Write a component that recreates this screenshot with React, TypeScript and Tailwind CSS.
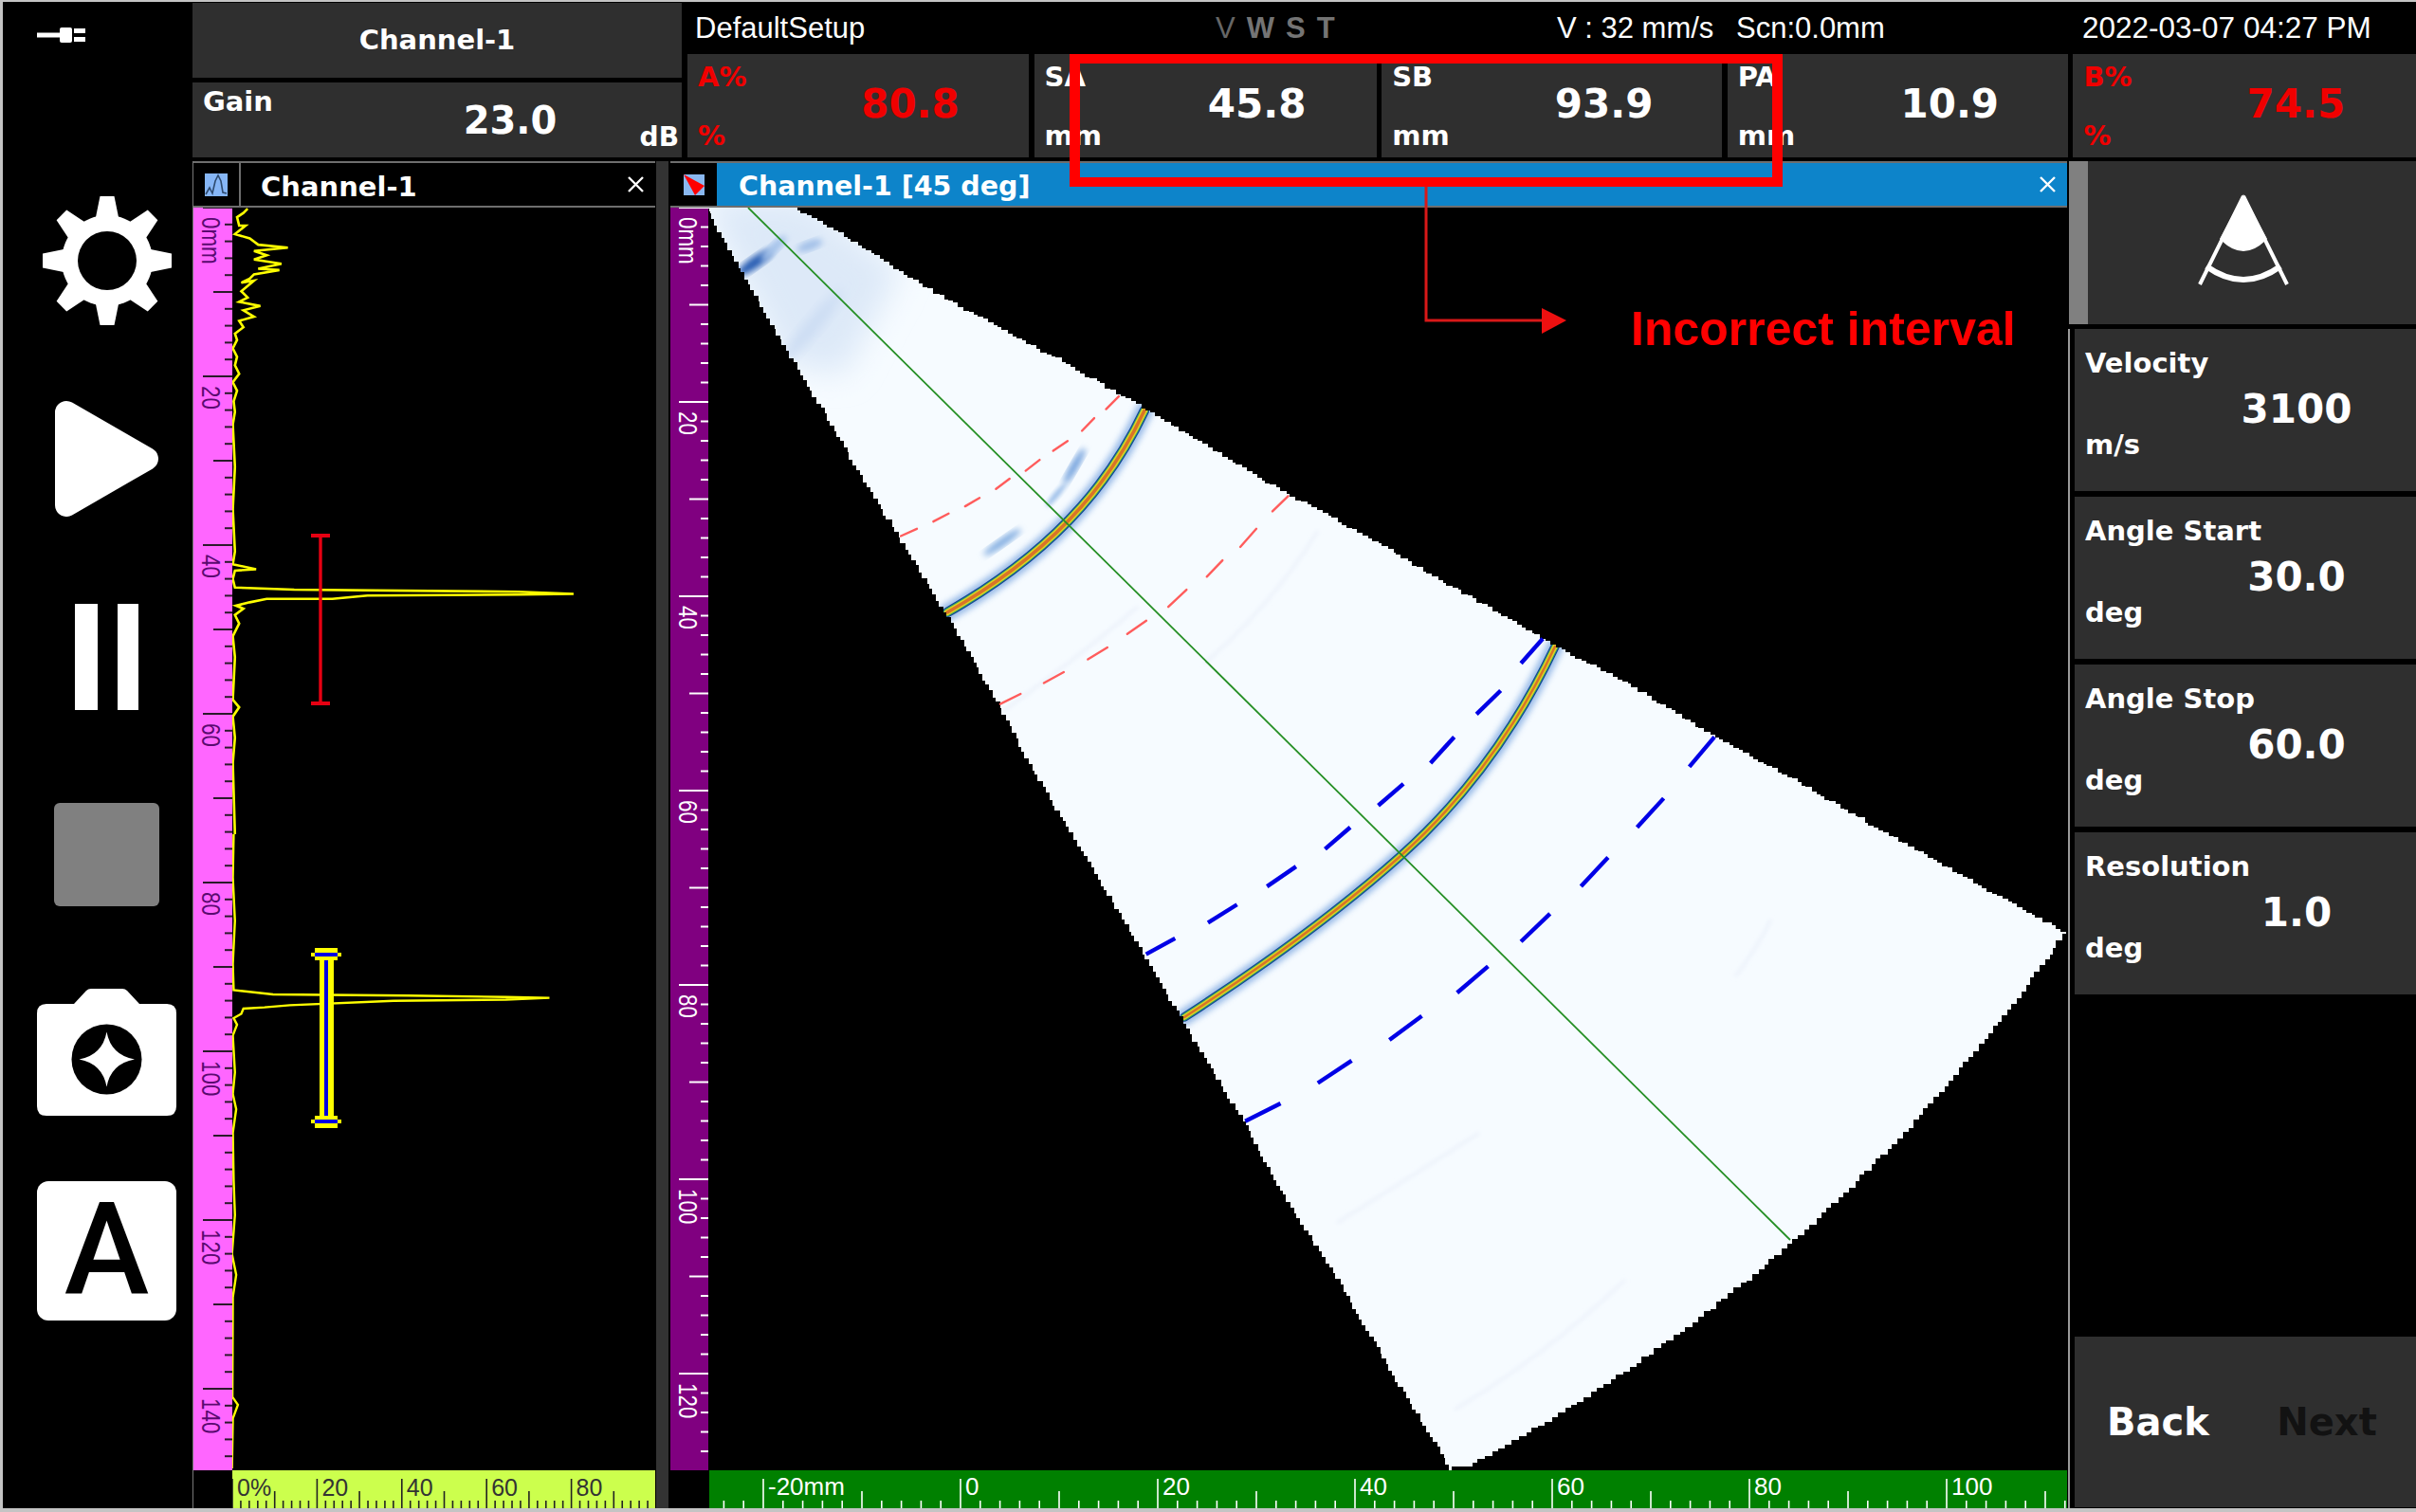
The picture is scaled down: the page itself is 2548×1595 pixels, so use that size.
import React from "react";

const TAHOMA = "font-['DejaVu_Sans',sans-serif] font-bold";
const ARIAL = "font-['Liberation_Sans',Arial,sans-serif]";

type P = [number, number];
const z3 = (p: P): string => `${p[0] / 2.24},${p[1] / 2.24 + 180}`;
const z4 = (p: P): string => `${p[0] / 2.24},${p[1] / 2.19 + 880}`;
const z5 = (p: P): P => [p[0] / 2.24 + 700, p[1] / 2.613 + 200];
const z6 = (p: P): P => [p[0] / 1.96 + 1150, p[1] / 2.613 + 650];

const traceA: P[] = [[585,90],[575,100],[560,110],[565,130],[580,130],[555,150],[590,160],[610,175],[680,182],[600,190],[630,200],[600,210],[665,220],[610,232],[660,235],[600,245],[590,255],[570,265],[600,260],[570,285],[585,300],[565,310],[615,320],[575,330],[600,345],[565,355],[575,370],[555,385],[560,400],[550,420],[560,440],[555,460],[565,480],[550,500],[560,520],[552,545],[555,570],[550,600],[555,700],[550,800],[555,900],[550,930],[605,942],[555,945],[550,965],[555,985],[695,990],[1225,995],[1355,1000],[1225,1002],[868,1004],[785,1012],[630,1012],[590,1020],[558,1028],[575,1035],[555,1050],[565,1070],[550,1100],[555,1150],[550,1250],[565,1268],[550,1290],[555,1340],[550,1400],[555,1568]];
const traceB: P[] = [[552,0],[550,100],[555,200],[550,300],[552,360],[645,370],[965,373],[1195,376],[1298,378],[1195,382],[930,385],[685,395],[625,400],[575,403],[570,415],[552,425],[560,440],[550,465],[555,550],[550,600],[558,635],[550,690],[552,800],[555,880],[548,970],[558,1018],[550,1070],[549,1300],[562,1318],[550,1350],[548,1465]];

const redDashes: [P, P][] = [
  [[560,955],[598,935]],[[637,915],[673,893]],[[712,873],[746,850]],[[785,825],[817,797]],[[855,775],[888,745]],[[920,720],[954,693]],[[988,665],[1017,630]],[[1045,605],[1075,570]],
  [[795,1418],[843,1390]],[[898,1360],[945,1330]],[[1002,1295],[1048,1262]],[[1095,1225],[1140,1188]],[[1192,1150],[1235,1103]],[[1283,1067],[1320,1022]],[[1362,985],[1400,935]],[[1438,887],[1475,845]],
];
const blueDashes: [P, P][] = [
  [[115,932],[175,888]],[[243,845],[303,795]],[[365,745],[425,690]],[[485,642],[537,582]],[[595,522],[647,462]],[[703,405],[752,333]],[[798,270],[848,205]],[[890,130],[935,62]],
  [[320,1392],[393,1343]],[[470,1287],[540,1225]],[[618,1168],[685,1102]],[[758,1038],[822,965]],[[890,897],[950,820]],[[1014,745],[1070,665]],[[1130,582],[1185,502]],[[1238,415],[1290,333]],
];

const topEdge: P[] = [[834,219],[879,242],[937,280],[995,315],[1057,349],[1124,384],[1209,433],[1289,481],[1356,521],[1400,544],[1584,650],[1640,682],[1711,719],[1808,778],[1890,822],[1950,858],[2179,986]];
const leftEdge: P[] = [[1532,1551],[1465,1440],[1413,1350],[1349,1250],[1313,1182],[1247,1073],[1201,994],[1150,910],[1084,800],[1057,747],[995,640],[932,537],[879,449],[829,365],[785,288],[747,219]];

function noise(i: number): number {
  const v = Math.sin(i * 12.9898) * 43758.5453;
  return (v - Math.floor(v)) * 2 - 1;
}

function subdivide(pts: P[], step: number): P[] {
  const out: P[] = [];
  for (let i = 0; i < pts.length - 1; i++) {
    const [a, b] = [pts[i], pts[i + 1]];
    const n = Math.max(1, Math.round(Math.hypot(b[0] - a[0], b[1] - a[1]) / step));
    for (let k = 0; k < n; k++) out.push([a[0] + ((b[0] - a[0]) * k) / n, a[1] + ((b[1] - a[1]) * k) / n]);
  }
  return out;
}

function arcPoints(step: number): P[] {
  const p1: P = [2179, 986];
  const p2: P = [1552, 1547];
  const R = 1766;
  const mx = (p1[0] + p2[0]) / 2;
  const my = (p1[1] + p2[1]) / 2;
  const c = Math.hypot(p2[0] - p1[0], p2[1] - p1[1]);
  const nx = (p1[1] - p2[1]) / c;
  const ny = (p2[0] - p1[0]) / c;
  const sign = nx > 0 ? -1 : 1;
  const d = Math.sqrt(R * R - (c * c) / 4);
  const cx = mx + sign * nx * d;
  const cy = my + sign * ny * d;
  const a1 = Math.atan2(p1[1] - cy, p1[0] - cx);
  const a2 = Math.atan2(p2[1] - cy, p2[0] - cx);
  const n = Math.round(c / step);
  const out: P[] = [];
  for (let k = 0; k < n; k++) {
    const a = a1 + ((a2 - a1) * k) / n;
    out.push([cx + R * Math.cos(a), cy + R * Math.sin(a)]);
  }
  out.push(p2);
  return out;
}

function buildSector(): string {
  const rough: P[] = [
    ...subdivide(topEdge, 6),
    ...arcPoints(8),
    ...subdivide(leftEdge, 7),
  ];
  let d = "M747 219 L834 219";
  rough.forEach((p, i) => {
    const x = Math.round(p[0] + noise(i) * 1.4);
    const y = Math.round(p[1] + noise(i + 500) * 1.4);
    d += ` H${x} V${y}`;
  });
  return d + " Z";
}
const SECTOR = buildSector();

function VRuler({ x, w, step, labels, bg, tick, text }: { x: number; w: number; step: number; labels: string[]; bg: string; tick: string; text: string }) {
  const rows = [];
  for (let i = 0; 219 + i * step < 1551; i++) {
    const y = 219 + i * step;
    const len = i % 10 === 0 ? 31 : i % 5 === 0 ? 20 : 8;
    rows.push(<line key={i} x1={x + w - len} x2={x + w} y1={y} y2={y} stroke={tick} strokeWidth={2} />);
  }
  return (
    <svg width={w} height={1332} viewBox={`${x} 219 ${w} 1332`} className="block shrink-0" style={{ background: bg }}>
      {rows}
      {labels.map((l, k) => (
        <text
          key={l}
          transform={`translate(${x + 9},${219 + k * 10 * step + 10}) rotate(90) scale(0.8,1)`}
          fontSize={28}
          fill={text}
          className={ARIAL}
        >
          {l}
        </text>
      ))}
    </svg>
  );
}

function HRuler({ x0, w, zero, unit, start, end, bg, tick, text, labels, baseline, size }: { x0: number; w: number; zero: number; unit: number; start: number; end: number; bg: string; tick: string; text: string; labels: [number, string][]; baseline: number; size: number }) {
  const ticks = [];
  for (let v = start; v <= end; v += 2) {
    const px = zero + v * unit;
    const len = v % 20 === 0 ? 31 : v % 10 === 0 ? 18 : 8;
    ticks.push(<line key={v} x1={px} x2={px} y1={1591} y2={1591 - len} stroke={tick} strokeWidth={1.6} />);
  }
  return (
    <svg width={w} height={40} viewBox={`${x0} 1551 ${w} 40`} className="block shrink-0" style={{ background: bg }}>
      {ticks}
      {labels.map(([v, l]) => (
        <text key={l} x={zero + v * unit + 5} y={baseline} fontSize={size} fill={text} className={ARIAL}>
          {l}
        </text>
      ))}
    </svg>
  );
}

function Gate({ x, top, bottom }: { x: number; top: number; bottom: number }) {
  return (
    <g>
      <rect x={x - 7} y={top + 3} width={15} height={bottom - top - 6} fill="#ffff00" />
      <rect x={x - 2} y={top + 6} width={4} height={bottom - top - 12} fill="#0000e0" />
      <rect x={x - 12} y={top} width={24} height={13} fill="#ffff00" />
      <rect x={x - 16} y={top + 5} width={32} height={4} fill="#ffff00" />
      <rect x={x - 12} y={top + 5} width={24} height={4} fill="#0000e0" />
      <rect x={x - 12} y={bottom - 13} width={24} height={13} fill="#ffff00" />
      <rect x={x - 16} y={bottom - 9} width={32} height={4} fill="#ffff00" />
      <rect x={x - 12} y={bottom - 9} width={24} height={4} fill="#0000e0" />
    </g>
  );
}

function AScan() {
  return (
    <svg width={446} height={1332} viewBox="245 219 446 1332" className="block shrink-0 bg-black">
      <polyline points={traceA.map(z3).join(" ")} fill="none" stroke="#ffff00" strokeWidth={2.6} />
      <polyline points={traceB.map(z4).join(" ")} fill="none" stroke="#ffff00" strokeWidth={2.4} />
      <line x1={338} x2={338} y1={565} y2={742} stroke="#e60012" strokeWidth={3.4} />
      <line x1={328} x2={348} y1={565} y2={565} stroke="#e60012" strokeWidth={4} />
      <line x1={328} x2={348} y1={742} y2={742} stroke="#e60012" strokeWidth={4} />
      <Gate x={344} top={1000} bottom={1190} />
    </svg>
  );
}

function Arc({ d, w }: { d: string; w: number }) {
  return (
    <g fill="none" strokeLinecap="round">
      <path d={d} stroke="#7aa6e0" strokeWidth={w + 8} filter="url(#blur3)" opacity={0.75} />
      <path d={d} stroke="#123f96" strokeWidth={w} />
      <path d={d} stroke="#2f9a6a" strokeWidth={w - 2} />
      <path d={d} stroke="#dcd420" strokeWidth={w - 4} />
      <path d={d} stroke="#d8622a" strokeWidth={w - 7} opacity={0.85} />
    </g>
  );
}

function Sector() {
  return (
    <svg width={1433} height={1332} viewBox="747 219 1433 1332" className="block shrink-0 bg-black">
      <defs>
        <clipPath id="sectorClip">
          <path d={SECTOR} />
        </clipPath>
        <filter id="blur2" x="-50%" y="-50%" width="200%" height="200%"><feGaussianBlur stdDeviation="2" /></filter>
        <filter id="blur3" x="-20%" y="-20%" width="140%" height="140%"><feGaussianBlur stdDeviation="3" /></filter>
        <filter id="blur5" x="-50%" y="-50%" width="200%" height="200%"><feGaussianBlur stdDeviation="6" /></filter>
        <filter id="blur14" x="-50%" y="-50%" width="200%" height="200%"><feGaussianBlur stdDeviation="16" /></filter>
      </defs>
      <path d={SECTOR} fill="#f6fbff" shapeRendering="crispEdges" />
      <g clipPath="url(#sectorClip)">
        <polygon points="740,210 850,210 950,285 890,395 830,385" fill="#dde9f8" filter="url(#blur14)" />
        <ellipse cx={856} cy={345} rx={50} ry={7} transform="rotate(-50 856 345)" fill="#cbdcf3" filter="url(#blur5)" />
        <ellipse cx={796} cy={277} rx={22} ry={6} transform="rotate(-35 796 277)" fill="#2a5fb4" filter="url(#blur3)" />
        <ellipse cx={816} cy={262} rx={18} ry={5} transform="rotate(-45 816 262)" fill="#a4c2ea" filter="url(#blur3)" />
        <ellipse cx={854} cy={259} rx={14} ry={5} transform="rotate(-20 854 259)" fill="#a2c0e8" filter="url(#blur3)" />
        <ellipse cx={1133} cy={492} rx={22} ry={4} transform="rotate(-60 1133 492)" fill="#6f9fdc" filter="url(#blur3)" />
        <ellipse cx={1114} cy={522} rx={16} ry={3} transform="rotate(-50 1114 522)" fill="#9dbfe9" filter="url(#blur2)" />
        <ellipse cx={1057} cy={572} rx={24} ry={4} transform="rotate(-35 1057 572)" fill="#7fabe0" filter="url(#blur3)" />
        <g fill="none" stroke="#ebf1fa" strokeWidth={3} filter="url(#blur2)">
          <path d="M1830 1030 Q1850 1005 1868 970" />
          <path d="M1410 1290 Q1490 1240 1560 1195" />
          <path d="M1534 1487 Q1630 1430 1714 1350" />
          <path d="M1030 770 Q1130 700 1200 640" />
          <path d="M1270 700 Q1340 640 1390 560" />
        </g>
        <Arc d="M999 646 Q1085 597 1140 535 Q1180 490 1207 433" w={10.5} />
        <Arc d="M1249 1073 Q1385 985 1477 903 Q1578 813 1640 682" w={9.5} />
      </g>
      <line x1={789} y1={219} x2={1888} y2={1308} stroke="#258f25" strokeWidth={1.8} />
      {redDashes.map(([a, b], i) => {
        const p = z5(a);
        const q = z5(b);
        return <line key={i} x1={p[0]} y1={p[1]} x2={q[0]} y2={q[1]} stroke="#ff5c5c" strokeWidth={2.4} strokeLinecap="round" />;
      })}
      {blueDashes.map(([a, b], i) => {
        const p = z6(a);
        const q = z6(b);
        return <line key={i} x1={p[0]} y1={p[1]} x2={q[0]} y2={q[1]} stroke="#0000e6" strokeWidth={4.4} />;
      })}
    </svg>
  );
}

function Gear() {
  const angles = [0, 45, 90, 135, 180, 225, 270, 315];
  return (
    <svg width={136} height={136} viewBox="0 0 136 136">
      <circle cx={68} cy={68} r={48} fill="#fff" />
      {angles.map((a) => (
        <polygon key={a} points="60.5,0 75.5,0 81,27 55,27" fill="#fff" transform={`rotate(${a} 68 68)`} />
      ))}
      <circle cx={68} cy={68} r={31} fill="#000" />
    </svg>
  );
}

function Plug() {
  return (
    <svg width={51} height={16} viewBox="0 0 51 16" className="ml-[17px] self-start">
      <rect x={0} y={5.5} width={26} height={5} fill="#fff" />
      <rect x={24} y={0} width={13} height={16} rx={2} fill="#fff" />
      <rect x={39} y={1} width={12} height={5} fill="#fff" />
      <rect x={39} y={10} width={12} height={5} fill="#fff" />
    </svg>
  );
}

function Sidebar() {
  return (
    <div className="flex w-[200px] shrink-0 flex-col items-center pl-[19px]">
      <div className="mt-[27px] flex self-stretch">
        <Plug />
      </div>
      <div className="mt-[162px]">
        <Gear />
      </div>
      <svg width={110} height={122} viewBox="0 0 110 122" className="mt-[80px]">
        <polygon points="12,12 97,61 12,110" fill="#fff" stroke="#fff" strokeWidth={24} strokeLinejoin="round" />
      </svg>
      <div className="mt-[92px] flex gap-[21px]">
        <div className="h-[112px] w-[24px] bg-white" />
        <div className="h-[112px] w-[22px] bg-white" />
      </div>
      <div className="mt-[98px] h-[109px] w-[111px] rounded-[6px] bg-[#808080]" />
      <svg width={147} height={134} viewBox="0 0 147 134" className="mt-[87px]">
        <path d="M39 16 L52 2 Q54 0 57 0 L90 0 Q93 0 95 2 L108 16 L137 16 Q147 16 147 26 L147 124 Q147 134 137 134 L10 134 Q0 134 0 124 L0 26 Q0 16 10 16 Z" fill="#fff" />
        <circle cx={73.5} cy={74.5} r={37} fill="#000" />
        <path d="M73.5 45.5 Q78 70 103 74.5 Q78 79 73.5 103.5 Q69 79 44.5 74.5 Q69 70 73.5 45.5 Z" fill="#fff" />
      </svg>
      <div className="mt-[69px] flex h-[147px] w-[147px] items-center justify-center rounded-[12px] bg-white font-['Roboto',sans-serif] text-[135px] leading-none font-medium text-black">
        A
      </div>
    </div>
  );
}

function TopMeasure({ label, value, unit, red, w }: { label: string; value: string; unit: string; red?: boolean; w: string }) {
  const color = red ? "text-[#f00000]" : "text-white";
  return (
    <div className={`flex h-full shrink-0 bg-[#2f2f2f] ${w} ${TAHOMA} ${color}`}>
      <div className="flex w-[110px] shrink-0 flex-col pt-[6px] pl-[11px] text-[29px] leading-[36px] whitespace-nowrap">
        <div>{label}</div>
        <div className="mt-[26px]">{unit}</div>
      </div>
      <div className="flex w-[250px] items-center justify-center pb-[3px] text-[42px] leading-[48px]">{value}</div>
    </div>
  );
}

function SideParam({ label, value, unit }: { label: string; value: string; unit: string }) {
  return (
    <div className={`flex h-[171px] shrink-0 bg-[#2f2f2f] text-white ${TAHOMA}`}>
      <div className="flex w-[109px] shrink-0 flex-col pt-[18px] pl-[11px] text-[29px] leading-[36px] whitespace-nowrap">
        <div>{label}</div>
        <div className="mt-[50px]">{unit}</div>
      </div>
      <div className="flex w-[250px] items-center justify-center pb-[2px] text-[42px] leading-[48px]">{value}</div>
    </div>
  );
}

function CloseX() {
  return (
    <svg width={17} height={17} viewBox="0 0 17 17" className="shrink-0">
      <path d="M1 1 L16 16 M16 1 L1 16" stroke="#fff" strokeWidth={2.4} />
    </svg>
  );
}

function Header() {
  return (
    <div className="mt-[1px] flex h-[163px] shrink-0">
      <div className={`flex w-[516px] shrink-0 flex-col gap-[5px] text-white ${TAHOMA}`}>
        <div className="flex h-[79px] items-center justify-center bg-[#2f2f2f] pt-[1px] text-[29px]">Channel-1</div>
        <div className="flex h-[79px] bg-[#2f2f2f]">
          <div className="w-[200px] shrink-0 pt-[2px] pl-[11px] text-[29px] leading-[36px]">Gain</div>
          <div className="flex w-[270px] shrink-0 items-center justify-center text-[40px] leading-[48px]">23.0</div>
          <div className="flex flex-1 items-end justify-end pr-[3px] pb-[3px] text-[28px] leading-[36px]">dB</div>
        </div>
      </div>
      <div className="ml-[6px] flex flex-1 flex-col">
        <div className={`flex h-[54px] shrink-0 items-center text-[31px] text-white ${ARIAL} whitespace-nowrap`}>
          <div className="w-[557px] shrink-0 pl-[8px]">DefaultSetup</div>
          <div className="flex w-[360px] shrink-0 items-center gap-[12px] font-bold text-[#747474]">
            <span className="font-normal text-[#666]">V</span>
            <span>W</span>
            <span>S</span>
            <span>T</span>
          </div>
          <div className="w-[189px] shrink-0">V : 32 mm/s</div>
          <div className="w-[365px] shrink-0">Scn:0.0mm</div>
          <div className="text-[31.5px]">2022-03-07 04:27 PM</div>
        </div>
        <div className="flex h-[109px] gap-[5.6px]">
          <TopMeasure w="w-[360px]" label="A%" value="80.8" unit="%" red />
          <TopMeasure w="w-[361px]" label="SA" value="45.8" unit="mm" />
          <TopMeasure w="w-[359px]" label="SB" value="93.9" unit="mm" />
          <TopMeasure w="w-[359px]" label="PA" value="10.9" unit="mm" />
          <TopMeasure w="flex-1" label="B%" value="74.5" unit="%" red />
        </div>
      </div>
    </div>
  );
}

function LeftPane() {
  return (
    <div className="flex w-[489px] shrink-0 flex-col border-l border-[#777]">
      <div className="flex h-[49px] w-[487px] shrink-0 items-center border-y-2 border-[#6e6e6e] bg-black text-white">
        <div className="flex h-full w-[50px] shrink-0 items-center justify-center border-r-2 border-[#6e6e6e]">
          <svg width={24} height={24} viewBox="0 0 24 24">
            <rect width={24} height={24} fill="#86b6f6" />
            <polyline points="1,22 5,15 8,21 11,8 14,2 17,8 19,20 23,21" fill="none" stroke="#2d4a6e" strokeWidth={1.6} />
          </svg>
        </div>
        <div className={`ml-[21px] flex-1 pt-[5px] text-[29px] leading-none ${TAHOMA}`}>Channel-1</div>
        <div className="pr-[12px]">
          <CloseX />
        </div>
      </div>
      <div className="flex h-[1332px] shrink-0">
        <VRuler x={204} w={41} step={17.8} labels={["0mm", "20", "40", "60", "80", "100", "120", "140"]} bg="#ff66ff" tick="#2a1a2a" text="#5a0a70" />
        <AScan />
      </div>
      <div className="flex h-[40px] shrink-0">
        <div className="w-[41px] shrink-0 bg-black" />
        <HRuler
          x0={245}
          w={446}
          zero={245}
          unit={4.47}
          start={0}
          end={98}
          bg="#ccff4d"
          tick="#222"
          text="#333"
          baseline={1578}
          size={25}
          labels={[[0, "0%"], [20, "20"], [40, "40"], [60, "60"], [80, "80"]]}
        />
      </div>
    </div>
  );
}

function RightPane() {
  return (
    <div className="ml-[2px] flex w-[1474px] shrink-0 flex-col">
      <div className="flex h-[49px] w-[1473px] shrink-0 border-y-2 border-[#6e6e6e] text-white">
        <div className="flex w-[49px] shrink-0 items-center justify-center bg-black">
          <svg width={22} height={22} viewBox="0 0 22 22">
            <rect width={22} height={22} fill="#8ab8f0" />
            <polygon points="0,0 22,12 12,22" fill="#f00" />
          </svg>
        </div>
        <div className="flex flex-1 items-center bg-[#0d84ca] pr-[12px] pl-[23px]">
          <div className={`flex-1 pt-[5px] text-[28.5px] leading-none ${TAHOMA}`}>Channel-1 [45 deg]</div>
          <CloseX />
        </div>
      </div>
      <div className="flex h-[1332px] shrink-0">
        <VRuler x={707} w={40} step={20.5} labels={["0mm", "20", "40", "60", "80", "100", "120"]} bg="#800080" tick="#fff" text="#fff" />
        <Sector />
      </div>
      <div className="flex h-[40px] shrink-0">
        <div className="w-[41px] shrink-0 bg-black" />
        <HRuler
          x0={748}
          w={1432}
          zero={1013}
          unit={10.4}
          start={-24}
          end={112}
          bg="#008000"
          tick="#fff"
          text="#fff"
          baseline={1577}
          size={26}
          labels={[[-20, "-20mm"], [0, "0"], [20, "20"], [40, "40"], [60, "60"], [80, "80"], [100, "100"]]}
        />
      </div>
    </div>
  );
}

function RightColumn() {
  return (
    <div className="flex flex-1 flex-col">
      <div className="flex h-[172px] shrink-0">
        <div className="ml-[1px] w-[20px] shrink-0 bg-[#808080]" />
        <div className="flex flex-1 justify-center bg-[#2f2f2f] pt-[35px] pr-[18px]">
          <svg width={96} height={98} viewBox="0 0 96 98">
            <path d="M48 0 L23 47 Q48 73 73 47 Z" fill="#fff" />
            <path d="M48 2 L2 95 M48 2 L94 95" fill="none" stroke="#fff" strokeWidth={4} />
            <path d="M9 76 Q48 104 87 76" fill="none" stroke="#fff" strokeWidth={6} />
          </svg>
        </div>
      </div>
      <div className="mt-[5px] flex flex-1 flex-col border-l-2 border-[#9a9a9a] pl-[5px]">
        <div className="flex flex-col gap-[6px]">
          <SideParam label="Velocity" value="3100" unit="m/s" />
          <SideParam label="Angle Start" value="30.0" unit="deg" />
          <SideParam label="Angle Stop" value="60.0" unit="deg" />
          <SideParam label="Resolution" value="1.0" unit="deg" />
        </div>
        <div className={`mt-auto mb-[1px] grid h-[180px] grid-cols-[176px_180px] items-center bg-[#2f2f2f] text-[40px] ${TAHOMA}`}>
          <div className="text-center text-white">Back</div>
          <div className="text-center text-[#121212]">Next</div>
        </div>
      </div>
    </div>
  );
}

function Annotation() {
  return (
    <>
      <div className="absolute top-[57px] left-[1128px] h-[140px] w-[752px] border-x-[11px] border-y-[10px] border-[#ff0000]" />
      <svg width={160} height={160} viewBox="1500 195 160 160" className="absolute top-[195px] left-[1500px]">
        <path d="M1504 197 L1504 338 L1630 338" fill="none" stroke="#d81818" strokeWidth={3} />
        <polygon points="1626,325 1652,338 1626,352" fill="#ee1010" />
      </svg>
      <div className={`absolute top-[319px] left-[1720px] text-[50px] leading-[56px] font-bold whitespace-nowrap text-[#ff0000] ${ARIAL}`}>
        Incorrect interval
      </div>
    </>
  );
}

export default function App() {
  return (
    <div className="relative h-[1595px] w-[2548px] overflow-hidden bg-[#c4c4c4] pt-[2px] pb-[4px] pl-[3px]">
      <div className="flex h-full bg-black">
        <Sidebar />
        <div className="flex min-w-0 flex-1 flex-col">
          <Header />
          <div className="mt-[4px] flex min-h-0 flex-1">
            <LeftPane />
            <div className="w-[13px] shrink-0 bg-[#333]" />
            <RightPane />
            <RightColumn />
          </div>
        </div>
      </div>
      <Annotation />
    </div>
  );
}
